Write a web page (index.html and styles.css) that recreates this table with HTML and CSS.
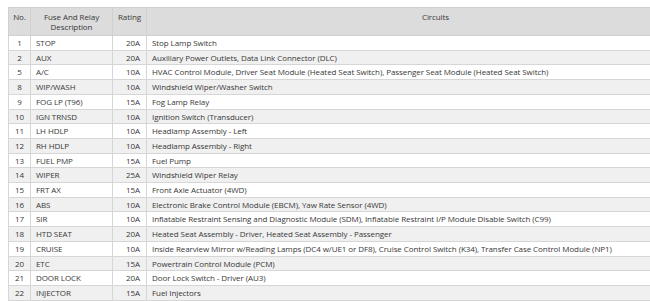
FILE: index.html
```html
<!DOCTYPE html>
<html>
<head>
<meta charset="utf-8">
<link rel="stylesheet" href="styles.css">
</head>
<body>
<table class="fuse-table">
  <colgroup>
    <col class="c-no"><col class="c-name"><col class="c-rating"><col class="c-circ">
  </colgroup>
  <thead>
    <tr><th>No.</th><th>Fuse And Relay<br>Description</th><th>Rating</th><th>Circuits</th></tr>
  </thead>
  <tbody>
    <tr><td class="no">1</td><td>STOP</td><td class="rt">20A</td><td>Stop Lamp Switch</td></tr>
    <tr><td class="no">2</td><td>AUX</td><td class="rt">20A</td><td>Auxiliary Power Outlets, Data Link Connector (DLC)</td></tr>
    <tr><td class="no">5</td><td>A/C</td><td class="rt">10A</td><td>HVAC Control Module, Driver Seat Module (Heated Seat Switch), Passenger Seat Module (Heated Seat Switch)</td></tr>
    <tr><td class="no">8</td><td>WIP/WASH</td><td class="rt">10A</td><td>Windshield Wiper/Washer Switch</td></tr>
    <tr><td class="no">9</td><td>FOG LP (T96)</td><td class="rt">15A</td><td>Fog Lamp Relay</td></tr>
    <tr><td class="no">10</td><td>IGN TRNSD</td><td class="rt">10A</td><td>Ignition Switch (Transducer)</td></tr>
    <tr><td class="no">11</td><td>LH HDLP</td><td class="rt">10A</td><td>Headlamp Assembly - Left</td></tr>
    <tr><td class="no">12</td><td>RH HDLP</td><td class="rt">10A</td><td>Headlamp Assembly - Right</td></tr>
    <tr><td class="no">13</td><td>FUEL PMP</td><td class="rt">15A</td><td>Fuel Pump</td></tr>
    <tr><td class="no">14</td><td>WIPER</td><td class="rt">25A</td><td>Windshield Wiper Relay</td></tr>
    <tr><td class="no">15</td><td>FRT AX</td><td class="rt">15A</td><td>Front Axle Actuator (4WD)</td></tr>
    <tr><td class="no">16</td><td>ABS</td><td class="rt">10A</td><td>Electronic Brake Control Module (EBCM), Yaw Rate Sensor (4WD)</td></tr>
    <tr><td class="no">17</td><td>SIR</td><td class="rt">10A</td><td>Inflatable Restraint Sensing and Diagnostic Module (SDM), Inflatable Restraint I/P Module Disable Switch (C99)</td></tr>
    <tr><td class="no">18</td><td>HTD SEAT</td><td class="rt">20A</td><td>Heated Seat Assembly - Driver, Heated Seat Assembly - Passenger</td></tr>
    <tr><td class="no">19</td><td>CRUISE</td><td class="rt">10A</td><td>Inside Rearview Mirror w/Reading Lamps (DC4 w/UE1 or DF8), Cruise Control Switch (K34), Transfer Case Control Module (NP1)</td></tr>
    <tr><td class="no">20</td><td>ETC</td><td class="rt">15A</td><td>Powertrain Control Module (PCM)</td></tr>
    <tr><td class="no">21</td><td>DOOR LOCK</td><td class="rt">20A</td><td>Door Lock Switch - Driver (AU3)</td></tr>
    <tr><td class="no">22</td><td>INJECTOR</td><td class="rt">15A</td><td>Fuel Injectors</td></tr>
  </tbody>
</table>
</body>
</html>
```
FILE: styles.css
```css
html, body {
  margin: 0;
  padding: 0;
  background: #fff;
  overflow: hidden;
}
body {
  padding: 7px 0 0 8px;
  font-family: "Open Sans", "Noto Sans", sans-serif;
  font-size: 8px;
  letter-spacing: -0.08px;
  color: #383838;
}
.fuse-table {
  border-collapse: collapse;
  table-layout: fixed;
  width: 716px;
}
.c-no { width: 22px; }
.c-name { width: 82px; }
.c-rating { width: 34px; }
.c-circ { width: 578px; }
.fuse-table th {
  background: #dcdcdc;
  font-weight: normal;
  text-align: center;
  vertical-align: top;
  padding: 4px 2px 0;
  height: 23px;
  line-height: 9.5px;
  border: 1px solid #d0d0d0;
}
.fuse-table td {
  height: 13.7px;
  line-height: 13.7px;
  padding: 0 5px;
  border: 1px solid #d6d6d6;
  white-space: nowrap;
  overflow: hidden;
}
.fuse-table tbody tr:nth-child(even) td {
  background: #f0f0f0;
}
.fuse-table td.no {
  text-align: center;
  padding: 0;
}
.fuse-table td.rt {
  text-align: right;
  padding-right: 6px;
}
```
